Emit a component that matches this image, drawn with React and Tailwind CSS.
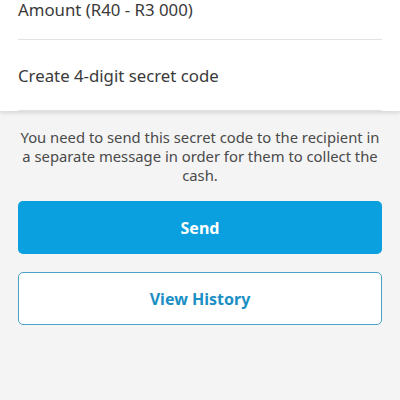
import React from "react";

const App = () => {
  return (
    <div
      className="min-h-[400px] w-[400px] overflow-hidden bg-[#f4f4f4]"
      style={{ fontFamily: '"Noto Sans", "Open Sans", sans-serif' }}
    >
      {/* form fields */}
      <div className="-mt-[30px] bg-white px-[18px] shadow-[0_2px_4px_rgba(0,0,0,0.12)]">
        <div className="border-b border-[#e2e2e2] pt-[28px] pb-[17px]">
          <p className="text-[16.8px] leading-[24px] text-[#3a3a3a]">Amount (R40 - R3 000)</p>
        </div>
        <div className="border-b border-[#e2e2e2] pt-[24px] pb-[22px]">
          <p className="text-[16.8px] leading-[24px] text-[#3a3a3a]">Create 4-digit secret code</p>
        </div>
      </div>

      <p className="mt-[17px] px-[20px] text-center text-[14.8px] leading-[19px] text-[#4a4a4a]">
        You need to send this secret code to the recipient in a separate message in order for them to collect the cash.
      </p>

      <div className="mt-[16px] flex flex-col gap-[18px] px-[18px]">
        <button className="h-[53px] w-full rounded-[5px] bg-[#0a9fde] text-[16px] font-bold text-white">
          Send
        </button>
        <button className="h-[53px] w-full rounded-[5px] border border-[#4aa3c6] bg-white text-[16px] font-bold text-[#1b8fc4]">
          View History
        </button>
      </div>
    </div>
  );
};

export default App;
